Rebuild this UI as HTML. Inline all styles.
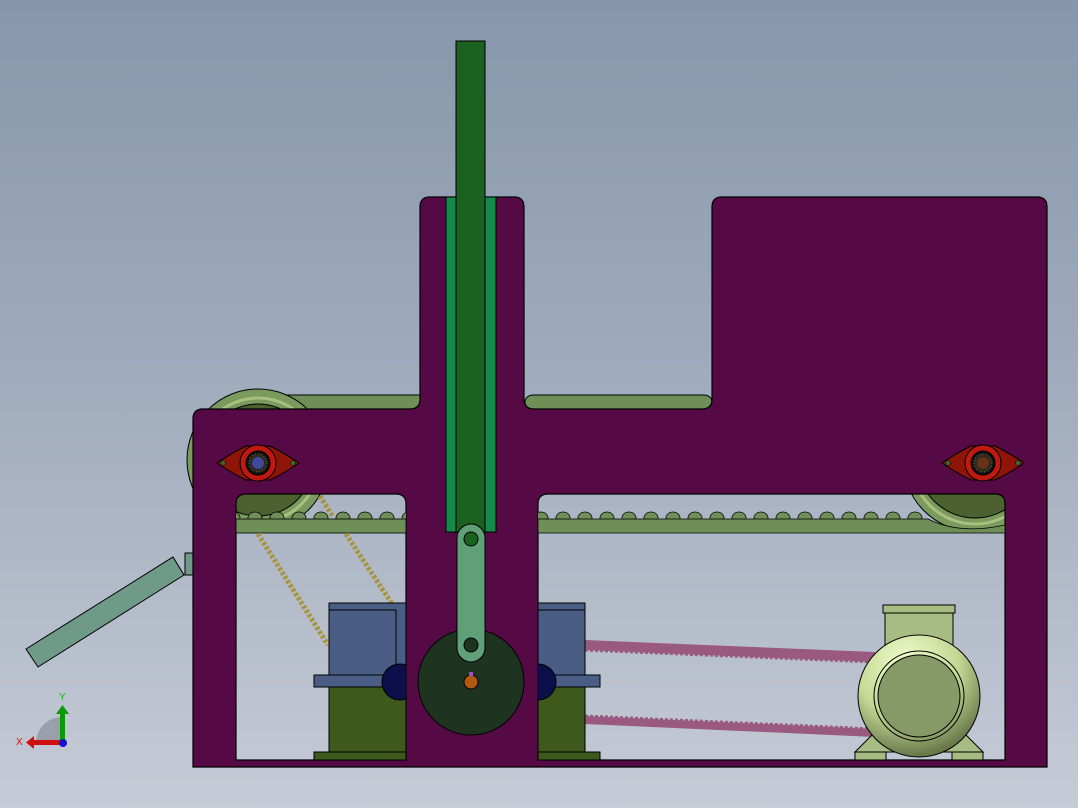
<!DOCTYPE html>
<html><head><meta charset="utf-8"><style>
html,body{margin:0;padding:0;width:1078px;height:808px;overflow:hidden;}
svg{display:block;font-family:"Liberation Sans",sans-serif;}
</style></head><body>
<svg width="1078" height="808" viewBox="0 0 1078 808" xmlns="http://www.w3.org/2000/svg">
<defs>
<linearGradient id="bg" x1="0" y1="0" x2="0" y2="1">
<stop offset="0" stop-color="#8796ab"/><stop offset="0.5" stop-color="#a2adbe"/><stop offset="1" stop-color="#c6cbd6"/></linearGradient>
<radialGradient id="mot" cx="0.4" cy="0.25" r="0.85">
<stop offset="0" stop-color="#f4ffd0"/><stop offset="0.5" stop-color="#c4d894"/><stop offset="1" stop-color="#4a5a32"/></radialGradient>
<pattern id="teeth" width="22" height="10" patternUnits="userSpaceOnUse" x="2" y="510">
<path d="M4 10 V8 A7 6 0 0 1 18 8 V10 Z" fill="#6e9058" stroke="#000" stroke-width="0.8"/>
</pattern>
<clipPath id="lw"><rect x="236" y="494" width="170" height="266"/></clipPath>
<clipPath id="rw"><rect x="538" y="494" width="467" height="266"/></clipPath>
</defs>
<rect width="1078" height="808" fill="url(#bg)"/>

<!-- top belt strips behind frame -->
<path d="M215 409 Q225 395 240 395 H420 V409 Z" fill="#6e9058" stroke="#000" stroke-width="1"/>
<rect x="525" y="395" width="187" height="14" rx="8" fill="#6e9058" stroke="#000" stroke-width="1"/>
<!-- left pulley -->
<circle cx="258" cy="460" r="71" fill="#7a9a5e" stroke="#000" stroke-width="1"/>
<circle cx="258" cy="460" r="62" fill="none" stroke="#a8c080" stroke-width="3"/>
<circle cx="258" cy="460" r="56" fill="#4c6030" stroke="#000" stroke-width="1"/>
<!-- right pulley -->
<circle cx="975" cy="460" r="72" fill="#7a9a5e" stroke="#000" stroke-width="1"/>
<circle cx="975" cy="460" r="64" fill="none" stroke="#a8c080" stroke-width="3"/>
<circle cx="975" cy="460" r="58" fill="#4c6030" stroke="#000" stroke-width="1"/>

<!-- chute -->
<polygon points="26,649 173,557 184,575 38,667" fill="#6f9a88" stroke="#000" stroke-width="1"/>
<rect x="185" y="553" width="8" height="22" fill="#6f9a88" stroke="#000" stroke-width="1"/>

<!-- frame -->
<path fill-rule="evenodd" fill="#550a45" stroke="#000" stroke-width="1.2" d="
M203 409 H410 Q420 409 420 399 V207 Q420 197 430 197 H514 Q524 197 524 207 V399 Q524 409 534 409 H702 Q712 409 712 399 V207 Q712 197 722 197 H1037 Q1047 197 1047 207 V767 H193 V419 Q193 409 203 409 Z
M246 494 H396 Q406 494 406 504 V760 H236 V504 Q236 494 246 494 Z
M548 494 H995 Q1005 494 1005 504 V760 H538 V504 Q538 494 548 494 Z"/>

<!-- window contents left -->
<g clip-path="url(#lw)">
<rect x="236" y="510" width="170" height="10" fill="url(#teeth)"/>
<rect x="236" y="519" width="170" height="14" fill="#6e9058" stroke="#000" stroke-width="0.8"/>
<line x1="258" y1="534" x2="328" y2="645" stroke="#a8943a" stroke-width="5" stroke-dasharray="3 2"/>
<line x1="320" y1="496" x2="333" y2="517" stroke="#a8943a" stroke-width="5" stroke-dasharray="3 2"/>
<line x1="346" y1="534" x2="396" y2="610" stroke="#a8943a" stroke-width="5" stroke-dasharray="3 2"/>
<!-- gearbox left -->
<rect x="329" y="603" width="77" height="72" fill="#4a5e85" stroke="#000" stroke-width="1"/>
<line x1="329" y1="610" x2="396" y2="610" stroke="#000"/>
<line x1="396" y1="610" x2="396" y2="752" stroke="#000"/>
<rect x="314" y="675" width="92" height="12" fill="#4a5e85" stroke="#000" stroke-width="1"/>
<rect x="329" y="687" width="77" height="65" fill="#3d5a1c" stroke="#000" stroke-width="1"/>
<rect x="314" y="752" width="92" height="8" fill="#3d5a1c" stroke="#000" stroke-width="1"/>
<circle cx="400" cy="682" r="18" fill="#0c0f4a" stroke="#000"/>
</g>

<!-- window contents right -->
<g clip-path="url(#rw)">
<rect x="538" y="510" width="390" height="10" fill="url(#teeth)"/>
<path d="M538 519 H928 Q960 535 1005 525 V533 H538 Z" fill="#6e9058" stroke="#000" stroke-width="0.8"/>
<!-- pink belts -->
<polygon points="585,640 875,652 875,662 585,650" fill="#9a5a80"/>
<polyline points="585,650 875,662" fill="none" stroke="#9a5a80" stroke-width="3" stroke-dasharray="3 2"/>
<polygon points="585,716 875,729 875,737 585,724" fill="#9a5a80"/>
<polyline points="585,716 875,729" fill="none" stroke="#9a5a80" stroke-width="3" stroke-dasharray="3 2"/>
<!-- gearbox right -->
<rect x="538" y="603" width="47" height="72" fill="#4a5e85" stroke="#000" stroke-width="1"/>
<line x1="538" y1="610" x2="585" y2="610" stroke="#000"/>
<rect x="538" y="675" width="62" height="12" fill="#4a5e85" stroke="#000" stroke-width="1"/>
<rect x="538" y="687" width="47" height="65" fill="#3d5a1c" stroke="#000" stroke-width="1"/>
<rect x="538" y="752" width="62" height="8" fill="#3d5a1c" stroke="#000" stroke-width="1"/>
<circle cx="538" cy="682" r="18" fill="#0c0f4a" stroke="#000"/>
<!-- motor -->
<rect x="885" y="612" width="68" height="35" fill="#a6bc82" stroke="#000"/>
<rect x="883" y="605" width="72" height="8" fill="#a6bc82" stroke="#000"/>
<polygon points="872,735 966,735 983,752 855,752" fill="#a6bc82" stroke="#000"/>
<rect x="855" y="752" width="31" height="8" fill="#a6bc82" stroke="#000"/>
<rect x="952" y="752" width="31" height="8" fill="#a6bc82" stroke="#000"/>
<circle cx="919" cy="696" r="61" fill="url(#mot)" stroke="#000"/>
<circle cx="919" cy="696" r="45" fill="none" stroke="#000" stroke-width="1"/>
<circle cx="919" cy="696" r="41" fill="#869a68" stroke="#000" stroke-width="1"/>
</g>

<!-- column slider -->
<rect x="446" y="197" width="50" height="335" fill="#168a4a" stroke="#000" stroke-width="1"/>
<rect x="456" y="41" width="29" height="491" fill="#1b611f" stroke="#000" stroke-width="1"/>

<!-- disk and link -->
<circle cx="471" cy="682" r="53" fill="#1e3320" stroke="#000" stroke-width="1"/>
<path d="M457 538 A14 14 0 0 1 485 538 V648 A14 14 0 0 1 457 648 Z" fill="#5fa078" stroke="#000" stroke-width="1"/>
<circle cx="471" cy="539" r="7" fill="#1b611f" stroke="#000"/>
<circle cx="471" cy="645" r="7" fill="#1e3320" stroke="#000"/>
<circle cx="471" cy="682" r="7" fill="#b05a10" stroke="#000"/>
<rect x="469" y="672" width="4" height="4" fill="#a050c0"/>

<!-- bearings -->
<g transform="translate(258,463)">
<path d="M-41 0 C-31 -7 -22 -12 -12 -17 H12 C22 -12 31 -7 41 0 C31 7 22 12 12 17 H-12 C-22 12 -31 7 -41 0 Z" fill="#8e1508" stroke="#000"/>
<circle r="18" fill="#c01a10" stroke="#000"/>
<circle r="12" fill="#111" stroke="#000"/>
<circle r="9" fill="#2a2a20" stroke="#c0a040" stroke-width="0.6" stroke-dasharray="1 2"/>
<circle r="6" fill="#4048a0"/>
<circle cx="-35" r="2.5" fill="#3a6a30" stroke="#000" stroke-width="0.5"/>
<circle cx="35" r="2.5" fill="#3a6a30" stroke="#000" stroke-width="0.5"/>
</g>
<g transform="translate(983,463)">
<path d="M-41 0 C-31 -7 -22 -12 -12 -17 H12 C22 -12 31 -7 41 0 C31 7 22 12 12 17 H-12 C-22 12 -31 7 -41 0 Z" fill="#8e1508" stroke="#000"/>
<circle r="18" fill="#c01a10" stroke="#000"/>
<circle r="12" fill="#111" stroke="#000"/>
<circle r="9" fill="#2a2a20" stroke="#c0a040" stroke-width="0.6" stroke-dasharray="1 2"/>
<circle r="6" fill="#6a3018"/>
<circle cx="-35" r="2.5" fill="#3a6a30" stroke="#000" stroke-width="0.5"/>
<circle cx="35" r="2.5" fill="#3a6a30" stroke="#000" stroke-width="0.5"/>
</g>

<!-- axis triad -->
<path d="M62 743 L36 743 A26 26 0 0 1 62 717 Z" fill="#9aa0aa"/>
<rect x="60" y="713" width="5" height="30" fill="#0a9a0a"/>
<polygon points="56,714 62.5,705 69,714" fill="#0a9a0a"/>
<rect x="33" y="740" width="30" height="5" fill="#d01010"/>
<polygon points="34,736 26,742.5 34,749" fill="#d01010"/>
<circle cx="63" cy="743" r="4" fill="#1010d0"/>
<text x="59" y="700" font-size="10" fill="#10c010">Y</text>
<text x="16" y="745" font-size="10" fill="#e01010">X</text>
</svg>
</body></html>
